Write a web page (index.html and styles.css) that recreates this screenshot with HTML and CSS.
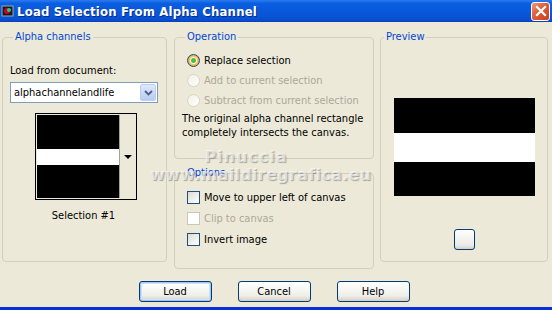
FILE: index.html
```html
<!DOCTYPE html>
<html lang="en">
<head>
  <meta charset="UTF-8" />
  <title>Load Selection From Alpha Channel</title>
  <link rel="stylesheet" href="styles.css">
</head>
<body>

  <div class="window">
    <div class="titlebar">
      <svg class="app-icon" width="14" height="14" viewBox="0 0 14 14">
        <rect x="1" y="2" width="11" height="10" fill="#1a1a1a" stroke="#9ab" />
        <circle cx="6" cy="7" r="3" fill="#c03" />
        <circle cx="8" cy="6" r="2" fill="#2c8" />
      </svg>
      <span class="title">Load Selection From Alpha Channel</span>
      <div class="close">
        <svg width="12" height="12" viewBox="0 0 12 12">
          <path d="M2 2 L10 10 M10 2 L2 10" stroke="#fff" stroke-width="2.2" stroke-linecap="square" />
        </svg>
      </div>
    </div>

    <div class="main">
      <fieldset class="group group-alpha">
        <legend>Alpha channels</legend>
        <div class="field-label">Load from document:</div>
        <div class="combo">
          <span>alphachannelandlife</span>
          <div class="combo-btn">
            <svg width="9" height="6" viewBox="0 0 9 6">
              <path d="M1 1 L4.5 4.5 L8 1" fill="none" stroke="#4d6185" stroke-width="1.8" />
            </svg>
          </div>
        </div>
        <div class="thumb">
          <div class="bands">
            <div class="band-black"></div>
            <div class="band-white"></div>
            <div class="band-black"></div>
          </div>
          <div class="thumb-drop"><span class="tri"></span></div>
        </div>
        <div class="thumb-caption">Selection #1</div>
      </fieldset>

      <div class="middle">
        <fieldset class="group group-op">
          <legend>Operation</legend>
          <label class="opt"><span class="radio checked"></span>Replace selection</label>
          <label class="opt disabled"><span class="radio"></span>Add to current selection</label>
          <label class="opt disabled"><span class="radio"></span>Subtract from current selection</label>
          <p class="note">The original alpha channel rectangle completely intersects the canvas.</p>
        </fieldset>

        <fieldset class="group group-options">
          <legend>Options</legend>
          <label class="opt"><span class="check"></span>Move to upper left of canvas</label>
          <label class="opt disabled"><span class="check"></span>Clip to canvas</label>
          <label class="opt"><span class="check"></span>Invert image</label>
        </fieldset>
      </div>

      <fieldset class="group group-preview">
        <legend>Preview</legend>
        <div class="preview">
          <div class="pv-black"></div>
          <div class="pv-white"></div>
          <div class="pv-black"></div>
        </div>
        <div class="small-btn"></div>
      </fieldset>
    </div>

    <div class="buttons">
      <button class="default">Load</button>
      <button>Cancel</button>
      <button>Help</button>
    </div>

    <div class="watermark">
      <div class="wm-name">Pinuccia</div>
      <div class="wm-site">www.maildiregrafica.eu</div>
    </div>
  </div>

</body>
</html>
```

FILE: styles.css
```css
body {
  margin: 0;
  padding: 0;
  background-color: #ece9d8;
  font-family: Tahoma, 'DejaVu Sans Condensed', 'Liberation Sans', sans-serif;
  font-size: 11px;
  color: #000;
}

.window {
  position: relative;
  width: 552px;
  height: 310px;
  background-color: #ece9d8;
  border-bottom: 3px solid #0831d9;
  box-sizing: border-box;
  overflow: hidden;
}

.titlebar {
  height: 22px;
  display: flex;
  align-items: center;
  background: linear-gradient(#2e7bf0 0%, #0a5fe0 15%, #0857d8 60%, #0a4fd0 90%, #0640b8 100%);
  padding-left: 1px;
}

.app-icon {
  margin-right: 2px;
}

.title {
  color: #fff;
  font-weight: bold;
  font-size: 13px;
  letter-spacing: 0.2px;
  text-shadow: 1px 1px 0 #0a2a8a;
  flex: 1;
}

.close {
  width: 19px;
  height: 19px;
  margin-right: 2px;
  border: 1px solid #fff;
  border-radius: 3px;
  background: linear-gradient(135deg, #f09a7a 0%, #e0603e 40%, #c8401c 100%);
  display: flex;
  align-items: center;
  justify-content: center;
  box-sizing: border-box;
}

.main {
  display: flex;
  padding: 8px 4px 0 2px;
  height: 239px;
}

.group {
  margin: 0;
  padding: 0 0 0 7px;
  border: 1px solid #d0d0bf;
  border-radius: 4px;
  min-width: 0;
  box-sizing: border-box;
}

.group legend {
  color: #0046d5;
  padding: 0 2px;
  margin-left: 3px;
  line-height: 14px;
}

.group-alpha {
  width: 165px;
  height: 232px;
}

.field-label {
  margin-top: 20px;
  line-height: 14px;
}

.combo {
  margin-top: 4px;
  width: 148px;
  height: 21px;
  border: 1px solid #7f9db9;
  background-color: #fff;
  box-sizing: border-box;
  display: flex;
  align-items: center;
  justify-content: space-between;
  padding-left: 3px;
}

.combo-btn {
  width: 16px;
  height: 17px;
  margin-right: 1px;
  border-radius: 2px;
  background: linear-gradient(#dfe8fc, #b8cbf5);
  border: 1px solid #bccdf5;
  box-sizing: border-box;
  display: flex;
  align-items: center;
  justify-content: center;
}

.thumb {
  margin: 10px 0 0 25px;
  width: 102px;
  height: 87px;
  border: 1px solid #000;
  box-sizing: border-box;
  display: flex;
  background-color: #ece9d8;
  padding: 1px;
}

.bands {
  width: 82px;
  display: flex;
  flex-direction: column;
}

.band-black {
  background-color: #000;
  flex: 1;
}

.band-white {
  background-color: #fff;
  height: 16px;
}

.thumb-drop {
  flex: 1;
  border-left: 1px solid #a0a0a0;
  display: flex;
  align-items: center;
  justify-content: center;
}

.tri {
  width: 0;
  height: 0;
  border-left: 4px solid transparent;
  border-right: 4px solid transparent;
  border-top: 4px solid #000;
}

.thumb-caption {
  margin-top: 9px;
  text-align: center;
  padding-right: 9px;
  line-height: 14px;
}

.middle {
  margin-left: 7px;
  width: 200px;
  display: flex;
  flex-direction: column;
  gap: 7px;
}

.group-op {
  height: 129px;
}

.group-options {
  flex: 1;
}

.opt {
  display: flex;
  align-items: center;
  height: 20px;
  padding-left: 5px;
}

.group-op .opt:first-of-type {
  margin-top: 6px;
}

.group-options .opt {
  height: 21px;
}

.group-options .opt:first-of-type {
  margin-top: 7px;
}

.opt.disabled {
  color: #aca899;
}

.radio {
  width: 11px;
  height: 11px;
  border-radius: 50%;
  border: 1px solid #d8d5c6;
  background: linear-gradient(135deg, #f1efe6, #ffffff);
  margin-right: 4px;
}

.radio.checked {
  border-color: #1c5180;
  background: radial-gradient(circle, #4dbf3a 0 2px, #f6f6f2 3px, #f8c26a 4px, #e8a030 6px);
}

.check {
  width: 11px;
  height: 11px;
  border: 1px solid #1c5180;
  background: linear-gradient(135deg, #dcdcd6, #ffffff);
  margin-right: 4px;
}

.opt.disabled .check {
  border-color: #c9c7ba;
  background: #fff;
}

.note {
  margin: 2px 0 0 0;
  line-height: 14px;
  width: 190px;
}

.group-preview {
  margin-left: 6px;
  width: 168px;
  height: 232px;
  display: flex;
  flex-direction: column;
  align-items: center;
  padding: 0;
}

.preview {
  margin-top: 54px;
  width: 141px;
  height: 98px;
  display: flex;
  flex-direction: column;
}

.pv-black {
  flex: 1;
  background-color: #000;
}

.pv-white {
  height: 29px;
  background-color: #fff;
}

.small-btn {
  margin-top: 33px;
  width: 21px;
  height: 21px;
  border: 1px solid #003c74;
  border-radius: 3px;
  background: linear-gradient(#ffffff, #ecebe6 80%, #d6d0c5);
  box-sizing: border-box;
}

.buttons {
  display: flex;
  justify-content: center;
  gap: 26px;
  padding-top: 12px;
  padding-right: 4px;
}

button {
  width: 73px;
  height: 21px;
  font-family: inherit;
  font-size: 11px;
  color: #000;
  border: 1px solid #003c74;
  border-radius: 3px;
  background: linear-gradient(#ffffff, #f0f0ea 70%, #d6d0c5);
  padding: 0;
}

button.default {
  box-shadow: inset 0 0 0 1px #a6c5f7, inset 0 0 0 2px #cee0fb;
}

.watermark {
  position: absolute;
  left: 150px;
  top: 148px;
  width: 192px;
  pointer-events: none;
  text-align: center;
  font-family: 'DejaVu Sans', sans-serif;
  font-weight: bold;
  font-size: 16px;
  line-height: 18px;
  color: rgba(255, 255, 255, 0.6);
  text-shadow: 1px 1px 1px rgba(110, 110, 110, 0.55);
}

.wm-name {
  letter-spacing: 1px;
}

.wm-site {
  letter-spacing: 0.3px;
}
```
